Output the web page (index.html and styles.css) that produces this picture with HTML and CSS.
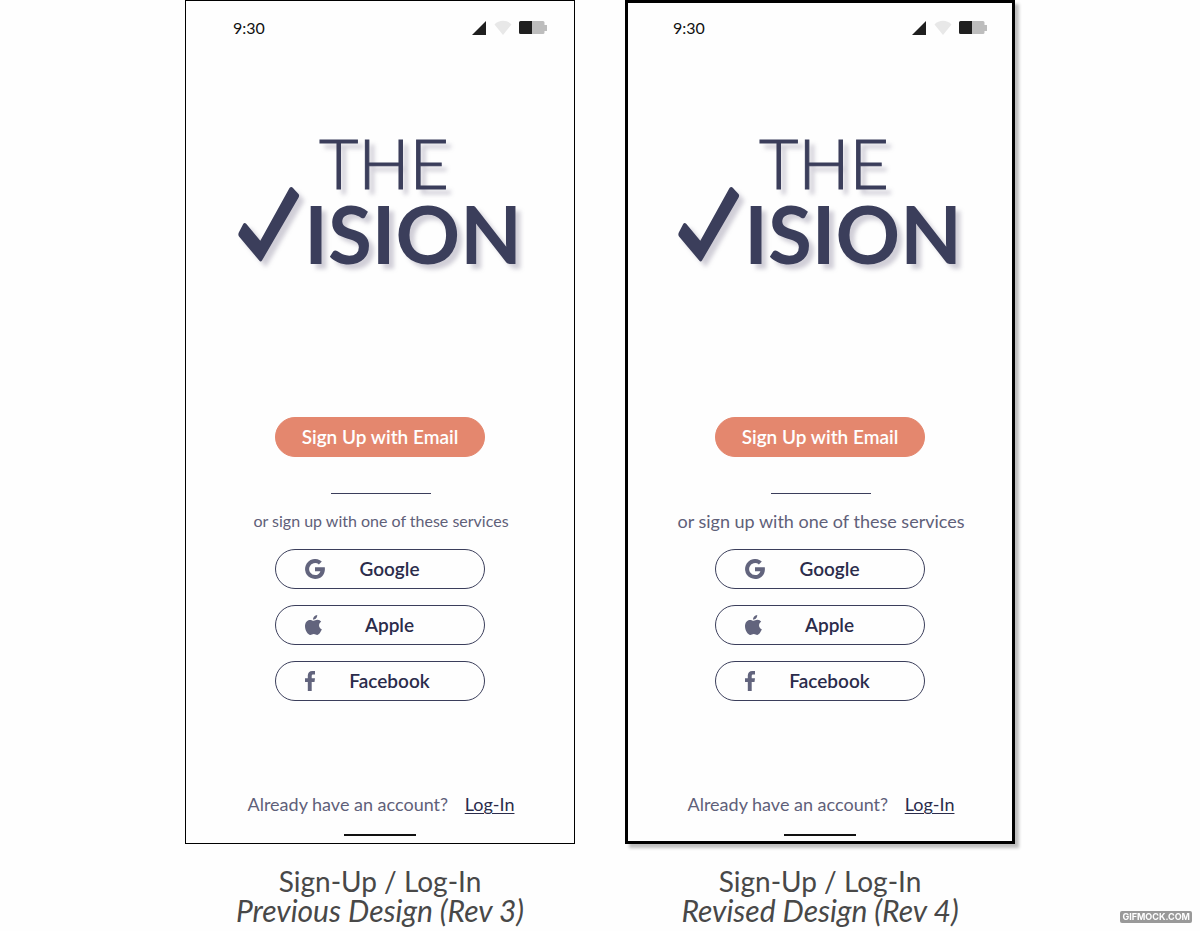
FILE: index.html
```html
<!DOCTYPE html>
<html lang="en">
<head>
<meta charset="utf-8">
<meta name="viewport" content="width=device-width, initial-scale=1">
<title>The Vision: Sign-Up / Log-In</title>
<link rel="stylesheet" href="styles.css">
</head>
<body>
<svg class="sprite" aria-hidden="true">
  <symbol id="status" viewBox="0 0 76 16">
    <path d="M0 15 14 1v14z" fill="#1f1f1f"/>
    <path d="M22.500 4.500C27 -.5 35 -.5 39.500 4.500L31 15z" fill="#e8e8e8"/>
    <path d="M60 1h11a1.500 1.500 0 0 1 1.500 1.500V5H75v6h-2.500v1.500A1.500 1.500 0 0 1 71 14H60z" fill="#bdbdbd"/>
    <path d="M48.500 1H60v13H48.500A1.500 1.500 0 0 1 47 12.500v-10A1.500 1.500 0 0 1 48.500 1z" fill="#1f1f1f"/>
  </symbol>
  <symbol id="check" viewBox="0 0 62 76">
    <path d="M51.500 2Q53.300 0 55 2L60.500 8Q61.700 9.500 60.600 11.500L24 74.500Q22.700 76.500 21.200 74.500L1 50.500Q-.2 49 .8 46.500L5.200 38Q6.500 36 8.200 37.800L22.300 54.700Z"/>
  </symbol>
  <symbol id="google" viewBox="0 0 20 20">
    <path d="M10 8.200h9.800c.9 6.600-3.300 11.800-9.700 11.800A10 10 0 1 1 16.800 2.600L13.900 5.400A6 6 0 1 0 10.100 16.100c2.700 0 4.700-1.500 5.300-3.900H10z"/>
  </symbol>
  <symbol id="apple" viewBox="0 0 17 20">
    <path d="M12.200 0c.2 2.600-1.800 4.700-4.100 4.700C7.900 2.300 9.900.2 12.200 0zM8.700 5.800c.9 0 2-1 3.800-1 1.500 0 2.900.8 3.700 2-3.200 2-2.700 6.200.6 7.500-.8 2.300-2.700 5.600-4.600 5.600-1.300 0-1.800-.8-3.400-.8s-2.200.8-3.400.8C2.700 19.900 0 15.200 0 11.300 0 7.300 2.400 5 4.900 5c1.700 0 2.800.8 3.800.8z"/>
  </symbol>
  <symbol id="facebook" viewBox="0 0 10 20">
    <path d="M2.800 20v-9H0V7.300h2.800V4.600C2.800 1.700 4.500 0 7.200 0H10v3.500H8.200c-1.200 0-1.500.6-1.500 1.500v2.300H10L9.500 11H6.700v9z"/>
  </symbol>
</svg>

<main class="board">
  <figure class="design">
    <section class="phone">
      <header class="status">
        <time>9:30</time>
        <svg class="status-icons" role="img" aria-label="Signal, Wi-Fi and battery"><use href="#status"/></svg>
      </header>
      <h1 class="logo">
        <span class="logo-the">THE</span>
        <span class="logo-vision"><svg class="logo-check" role="img" aria-label="V"><use href="#check"/></svg>ISION</span>
      </h1>
      <button class="pill primary" type="button">Sign Up with Email</button>
      <hr class="divider">
      <p class="hint">or sign up with one of these services</p>
      <div class="services">
        <button class="pill service" type="button"><svg class="icon-google" aria-hidden="true"><use href="#google"/></svg><span>Google</span></button>
        <button class="pill service" type="button"><svg class="icon-apple" aria-hidden="true"><use href="#apple"/></svg><span>Apple</span></button>
        <button class="pill service" type="button"><svg class="icon-facebook" aria-hidden="true"><use href="#facebook"/></svg><span>Facebook</span></button>
      </div>
      <p class="account">Already have an account? <a href="#login">Log-In</a></p>
      <div class="home-bar"></div>
    </section>
    <figcaption>Sign-Up / Log-In<em>Previous Design (Rev 3)</em></figcaption>
  </figure>

  <figure class="design">
    <section class="phone revised">
      <header class="status">
        <time>9:30</time>
        <svg class="status-icons" role="img" aria-label="Signal, Wi-Fi and battery"><use href="#status"/></svg>
      </header>
      <h1 class="logo">
        <span class="logo-the">THE</span>
        <span class="logo-vision"><svg class="logo-check" role="img" aria-label="V"><use href="#check"/></svg>ISION</span>
      </h1>
      <button class="pill primary" type="button">Sign Up with Email</button>
      <hr class="divider">
      <p class="hint">or sign up with one of these services</p>
      <div class="services">
        <button class="pill service" type="button"><svg class="icon-google" aria-hidden="true"><use href="#google"/></svg><span>Google</span></button>
        <button class="pill service" type="button"><svg class="icon-apple" aria-hidden="true"><use href="#apple"/></svg><span>Apple</span></button>
        <button class="pill service" type="button"><svg class="icon-facebook" aria-hidden="true"><use href="#facebook"/></svg><span>Facebook</span></button>
      </div>
      <p class="account">Already have an account? <a href="#login">Log-In</a></p>
      <div class="home-bar"></div>
    </section>
    <figcaption>Sign-Up / Log-In<em>Revised Design (Rev 4)</em></figcaption>
  </figure>
</main>
<div class="watermark">GIFMOCK.COM</div>
</body>
</html>
```
FILE: styles.css
```css
* { box-sizing: border-box; }

body {
  margin: 0;
  background: #fefefe;
  color: #5f6079;
  font-family: Lato, "Open Sans", sans-serif;
}

.sprite {
  position: absolute;
  width: 0;
  height: 0;
}

.board {
  display: flex;
  flex-wrap: wrap;
  justify-content: center;
  gap: 50px;
}

.design {
  flex: 0 1 390px;
  margin: 0;
}

.phone {
  --frame: 1px;
  display: flex;
  flex-direction: column;
  align-items: center;
  padding: calc(18px - var(--frame)) 0 calc(8px - var(--frame));
  border: var(--frame) solid #000;
}

.revised {
  --frame: 3px;
  box-shadow: 4px 4px 3px rgba(0, 0, 0, 0.25);
}

.status {
  display: flex;
  align-items: center;
  justify-content: space-between;
  width: 315px;
  height: 20px;
  margin-left: 21px;
  color: #111;
  font-size: 16px;
  line-height: 20px;
}

.status-icons {
  width: 76px;
  height: 16px;
}

.logo {
  display: flex;
  flex-direction: column;
  align-items: center;
  margin: 89px 0 150px;
  color: #3b3e5b;
  filter: drop-shadow(5px 5px 2px rgba(70, 65, 100, 0.25));
}

.logo-the {
  margin-left: 8px;
  font-size: 68px;
  font-weight: 300;
  line-height: 72px;
  -webkit-text-stroke: 1px currentColor;
}

.logo-vision {
  display: flex;
  align-items: flex-end;
  gap: 4px;
  margin-top: -13px;
  font-size: 80px;
  font-weight: 700;
  line-height: 68px;
}

.logo-check {
  width: 62px;
  height: 76px;
  margin-bottom: 5px;
  fill: currentColor;
}

.pill {
  width: 210px;
  height: 40px;
  padding: 0;
  border: 1px solid #3b3e5b;
  border-radius: 20px;
  background: transparent;
  color: #2b2c4b;
  font: 600 19px/24px Lato, "Open Sans", sans-serif;
}

.primary {
  border-color: #e4876e;
  background: #e4876e;
  color: #fff;
}

.divider {
  width: 100px;
  margin: 36px 0 15px 2px;
  border: 0;
  border-top: 1px solid #3b3e5b;
}

.hint {
  margin: 0 0 16px 2px;
  font-size: 16px;
  line-height: 24px;
}

.revised .hint { font-size: 18px; }

.services {
  display: grid;
  gap: 16px;
}

.service {
  display: grid;
  grid-template-columns: 20px 1fr;
  align-items: center;
  padding: 0 30px 0 29px;
}

.service svg {
  height: 20px;
  fill: #62647d;
}

.icon-google { width: 20px; }
.icon-apple { width: 17px; }
.icon-facebook { width: 10px; }

.account {
  margin: 91px 0 18px 2px;
  font-size: 18px;
  line-height: 24px;
}

.account a {
  margin-left: 12px;
  color: #2b2c4b;
  text-underline-offset: 2px;
  text-decoration-thickness: 1px;
}

.home-bar {
  width: 72px;
  height: 2px;
  background: #111;
}

figcaption {
  padding: 23px 0 6px;
  color: #484848;
  font-size: 28px;
  line-height: 29px;
  text-align: center;
}

figcaption em {
  display: block;
  font-size: 30px;
}

.watermark {
  position: fixed;
  right: 8px;
  bottom: 8px;
  padding: 0 2px;
  border-radius: 2px;
  background: #999;
  color: #fff;
  font: 700 9px/12px Inter, sans-serif;
}
```
